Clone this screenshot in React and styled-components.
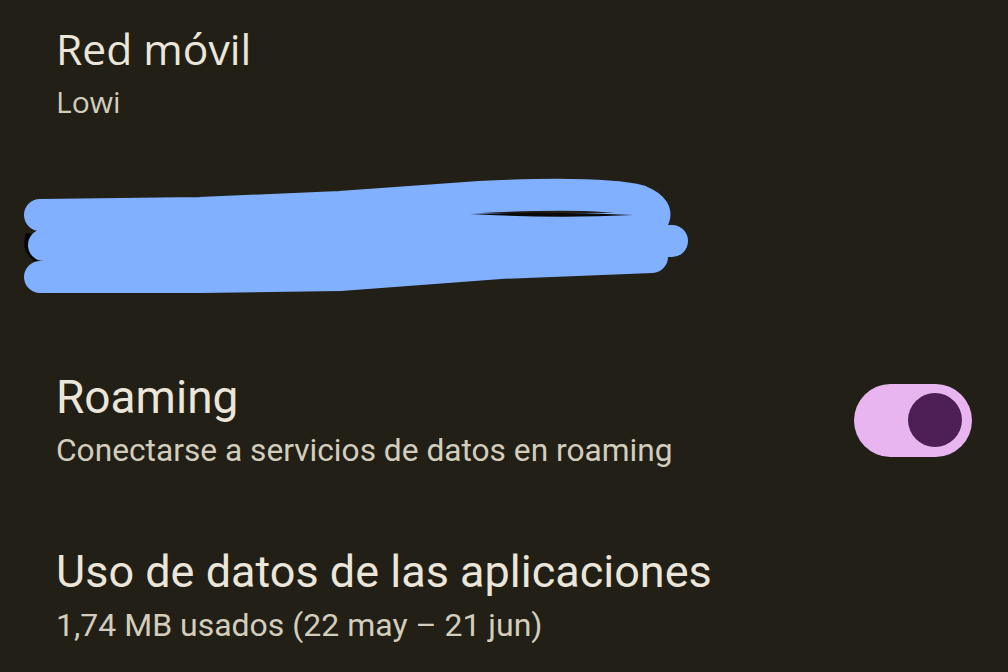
import React from "react";
import styled, { createGlobalStyle } from "styled-components";

const Global = createGlobalStyle`
  html, body {
    margin: 0;
    padding: 0;
    background: #221f16;
  }
  body {
    width: 1008px;
    height: 672px;
    overflow: hidden;
  }
`;

const Screen = styled.div`
  width: 1008px;
  height: 672px;
  background: #221f16;
  display: flex;
  flex-direction: column;
  font-family: Roboto, "Liberation Sans", sans-serif;
  overflow: hidden;
`;

const Item = styled.div`
  display: flex;
  align-items: center;
  padding: ${(p) => p.$pad || "0 36px 0 56px"};
  height: ${(p) => p.$h}px;
  flex-shrink: 0;
  box-sizing: border-box;
`;

const Texts = styled.div`
  flex: 1;
  display: flex;
  flex-direction: column;
`;

const Title = styled.div`
  color: #ebe6d9;
  font-family: ${(p) => (p.$alt ? '"Open Sans", "Noto Sans", sans-serif' : "Roboto, sans-serif")};
  font-size: ${(p) => p.$size || 45}px;
  line-height: 1.2;
  white-space: nowrap;
`;

const Summary = styled.div`
  color: #d3cdbd;
  font-family: ${(p) => (p.$alt ? '"Open Sans", "Noto Sans", sans-serif' : "Roboto, sans-serif")};
  font-size: ${(p) => p.$size || 31.7}px;
  line-height: 1.25;
  margin-top: ${(p) => p.$gap || 6}px;
  white-space: nowrap;
`;

const Track = styled.div`
  width: 118px;
  height: 73px;
  border-radius: 37px;
  background: #e9b5f1;
  display: flex;
  align-items: center;
  justify-content: flex-end;
  padding-right: 10px;
  box-sizing: border-box;
`;

const Thumb = styled.div`
  width: 54px;
  height: 54px;
  border-radius: 50%;
  background: #4e1e56;
`;

const Scribble = styled.svg`
  display: block;
`;

const Redacted = () => (
  <Scribble width="1008" height="130" viewBox="0 166 1008 130">
    <path d="M26 226 Q20 244 34 254 Q50 262 76 264 L60 232 Z" fill="#050505" />
    <g stroke="#80b0ff" strokeWidth="32" strokeLinecap="round" strokeLinejoin="round" fill="none">
      <path d="M40 208 L200 206 L340 200 L480 190 Q600 184 640 194 Q660 202 652 214" />
      <path d="M44 238 L300 236 L500 232 L672 234" />
      <path d="M40 270 L200 270 L340 268 L500 256 L652 250" />
      <path d="M60 222 L650 222" />
      <path d="M60 252 L640 242" />
    </g>
    <path d="M470 207 Q550 204 633 208 Q555 212 470 207 Z" fill="#0a0a0a" />
  </Scribble>
);

export default function App() {
  return (
    <Screen>
      <Global />
      <Item $h={144}>
        <Texts>
          <Title $alt $size={42.6}>Red móvil</Title>
          <Summary $alt $size={30} $gap={9}>Lowi</Summary>
        </Texts>
      </Item>
      <Item $h={188} $pad="0">
        <Redacted />
      </Item>
      <Item $h={176}>
        <Texts>
          <Title $size={46}>Roaming</Title>
          <Summary>Conectarse a servicios de datos en roaming</Summary>
        </Texts>
        <Track>
          <Thumb />
        </Track>
      </Item>
      <Item $h={174}>
        <Texts>
          <Title>Uso de datos de las aplicaciones</Title>
          <Summary $size={32}>1,74 MB usados (22 may – 21 jun)</Summary>
        </Texts>
      </Item>
    </Screen>
  );
}
